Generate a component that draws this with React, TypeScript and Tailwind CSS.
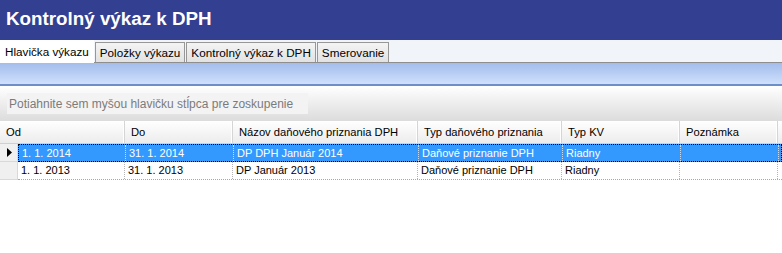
const font = { fontFamily: '"Liberation Sans", Arial, sans-serif' };

const tabs = ["Hlavička výkazu", "Položky výkazu", "Kontrolný výkaz k DPH", "Smerovanie"];

const columns = [
  { title: "Od", width: "w-[107px]" },
  { title: "Do", width: "w-[108px]" },
  { title: "Názov daňového priznania DPH", width: "w-[185px]" },
  { title: "Typ daňového priznania", width: "w-[144px]" },
  { title: "Typ KV", width: "w-[118px]" },
  { title: "Poznámka", width: "w-[98px]" },
];

const rows = [
  ["1. 1. 2014", "31. 1. 2014", "DP DPH Január 2014", "Daňové priznanie DPH", "Riadny", ""],
  ["1. 1. 2013", "31. 1. 2013", "DP Január 2013", "Daňové priznanie DPH", "Riadny", ""],
];

function HeaderCell({ title, className }: { title: string; className: string }) {
  return (
    <div
      className={`${className} flex h-full shrink-0 items-center border-r border-r-[#d5d5d5] bg-gradient-to-b from-white to-[#ececec] pl-[6px] text-[11.2px] text-black shadow-[inset_-1px_0_0_#ffffff]`}
    >
      {title}
    </div>
  );
}

export default function App() {
  return (
    <div className="h-[253px] w-[782px] overflow-hidden bg-white" style={font}>
      <div className="flex h-[40px] items-center bg-[#333f91] pl-[6px] pb-[2px]">
        <h1 className="text-[18.8px] font-bold text-white">Kontrolný výkaz k DPH</h1>
      </div>

      <div className="flex h-[22px] items-end bg-[#f1f5f9]">
        {tabs.map((tab, i) =>
          i === 0 ? (
            <div
              key={tab}
              className="relative z-10 -mb-px flex h-[23px] items-center bg-white px-[5px] text-[11.7px] text-black"
            >
              {tab}
            </div>
          ) : (
            <div
              key={tab}
              className="ml-px flex h-[20px] items-center border border-b-0 border-[#979797] bg-gradient-to-b from-[#f4f4f4] to-[#e2e2e2] px-[4px] text-[11.7px] text-black"
            >
              {tab}
            </div>
          ),
        )}
      </div>

      <div className="h-[24px] border-t border-t-[#8e8e8e] border-b-2 border-b-[#6d8ec6] bg-gradient-to-b from-[#a3bdeb] to-[#cfe0fc]" />

      <div className="h-[35px] bg-gradient-to-b from-white to-[#dcdcdc] pt-[7px] pl-[7px]">
        <div className="flex h-[21px] w-[301px] items-center bg-[#f3f3f3] pl-[2px] text-[12px] text-[#7b7b7b]">
          Potiahnite sem myšou hlavičku stĺpca pre zoskupenie
        </div>
      </div>

      <div className="flex h-[23px] border-b border-b-[#d0d0d0]">
        <HeaderCell title="Od" className="w-[125px] pl-[5px]" />
        {columns.slice(1).map((c) => (
          <HeaderCell key={c.title} title={c.title} className={c.width} />
        ))}
        <div className="h-full flex-1 bg-gradient-to-b from-white to-[#ececec]" />
      </div>

      {rows.map((row, r) => {
        const selected = r === 0;
        return (
          <div key={r} className="flex h-[18px]">
            <div className="flex w-[18px] shrink-0 items-center justify-center border-r border-b border-[#d9d9d9] bg-[#f0f0f0] pl-[2px]">
              {selected && (
                <svg width="5" height="9" viewBox="0 0 5 9">
                  <path d="M0 0 L5 4.5 L0 9 Z" fill="#000" />
                </svg>
              )}
            </div>
            <div
              className={`flex flex-1 ${
                selected
                  ? "border border-dotted border-black bg-[#3399ff] text-white"
                  : "border-b border-dotted border-b-[#a8a8a8] text-black"
              }`}
            >
              {row.map((cell, c) => (
                <div
                  key={c}
                  className={`${columns[c].width} flex h-full shrink-0 items-center border-r border-dotted pl-[3px] text-[11px] ${
                    selected ? "border-r-[#c8ddf3]" : "border-r-[#b4b4b4]"
                  } ${c === 0 ? "w-[106px]" : ""}`}
                >
                  {cell}
                </div>
              ))}
              <div className="flex-1" />
            </div>
          </div>
        );
      })}
    </div>
  );
}
